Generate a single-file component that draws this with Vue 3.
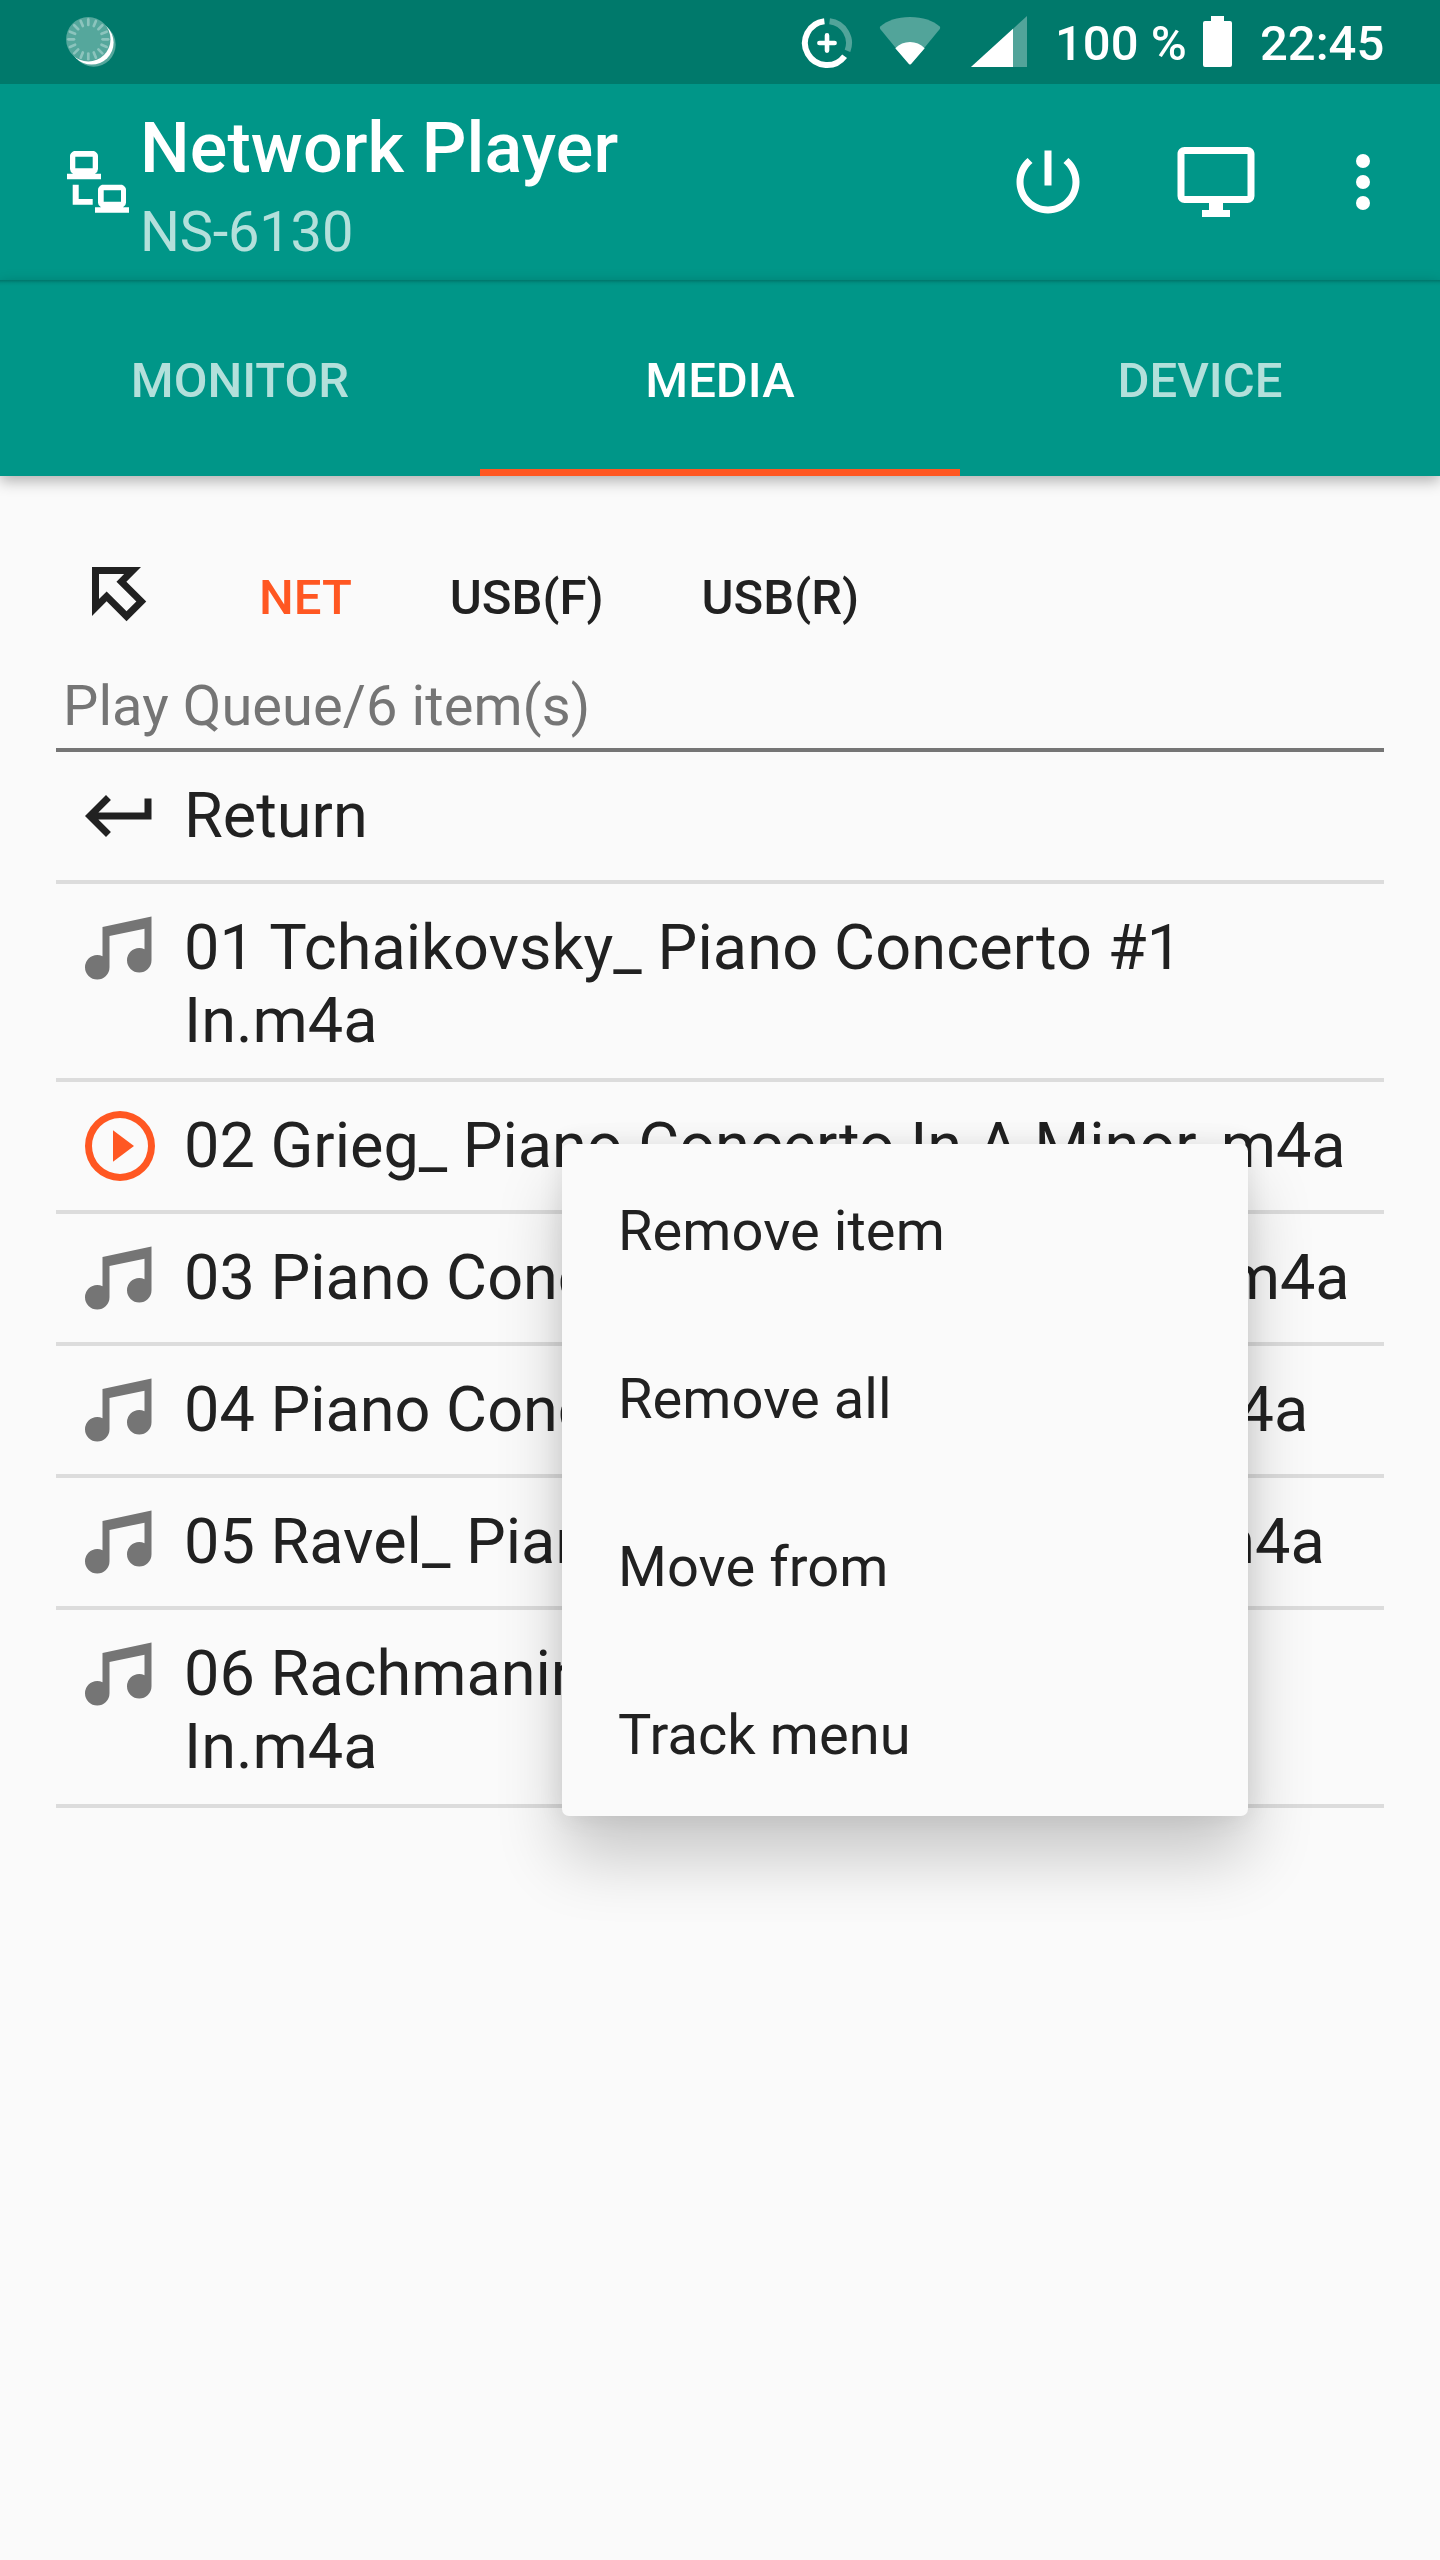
<script setup>
const tabs = [
  { label: 'Monitor' },
  { label: 'Media', active: true },
  { label: 'Device' },
]

const sources = [
  { label: 'NET', active: true },
  { label: 'USB(F)' },
  { label: 'USB(R)' },
]

const icons = {
  enter: 'M19,7V11H5.83L9.41,7.41L8,6L2,12L8,18L9.41,16.58L5.83,13H21V7H19Z',
  music:
    'M21,3V15.5A3.5,3.5 0 0,1 17.5,19A3.5,3.5 0 0,1 14,15.5A3.5,3.5 0 0,1 17.5,12C18.04,12 18.55,12.12 19,12.34V6.47L9,8.6V17.5A3.5,3.5 0 0,1 5.5,21A3.5,3.5 0 0,1 2,17.5A3.5,3.5 0 0,1 5.5,14C6.04,14 6.55,14.12 7,14.34V6L21,3Z',
  play:
    'M12,20A8,8 0 0,1 4,12A8,8 0 0,1 12,4A8,8 0 0,1 20,12A8,8 0 0,1 12,20M12,2A10,10 0 0,0 2,12A10,10 0 0,0 12,22A10,10 0 0,0 22,12A10,10 0 0,0 12,2M10,16.5L16,12L10,7.5V16.5Z',
}

const rows = [
  { icon: 'enter', title: 'Return' },
  { icon: 'music', title: '01 Tchaikovsky', rest: '_ Piano Concerto #1', ext: ' In.m4a', spacing: 0.14 },
  { icon: 'play', title: '02 Grieg_', rest: ' Piano Concerto In A Minor,', ext: ' m4a', spacing: -0.05 },
  { icon: 'music', title: '03 Piano Conc', rest: 'erto No. 21 In C Major.', ext: 'm4a', spacing: 0.34 },
  { icon: 'music', title: '04 Piano Conc', rest: 'erto No. 2 In C Minor.', ext: 'm4a', spacing: 0.05 },
  { icon: 'music', title: '05 Ravel_ Pian', rest: 'o Concerto In G Major.', ext: 'm4a', spacing: -0.68 },
  { icon: 'music', title: '06 Rachmaninov_ Piano Concerto #2 In.m4a' },
]

const menu = ['Remove item', 'Remove all', 'Move from', 'Track menu']
const ticks = Array.from({ length: 16 }, (_, i) => i * 22.5)
</script>

<template>
  <div class="screen">
    <div class="status">
      <svg class="spinner" width="52" height="52" viewBox="0 0 52 52">
        <circle cx="28.7" cy="27.7" r="22" fill="#55a79c" />
        <circle cx="26.6" cy="25.6" r="22" fill="#fff" />
        <circle cx="23.3" cy="22.3" r="22.2" fill="#55a79c" />
        <g stroke="#8cc4bd" stroke-width="2.7" stroke-linecap="round">
          <line
            v-for="t in ticks"
            :key="t"
            x1="23.3"
            y1="2.4"
            x2="23.3"
            y2="8"
            :transform="`rotate(${t} 23.3 22.3)`"
          />
        </g>
      </svg>
      <div class="indicators">
        <svg class="saver" width="52" height="52" viewBox="-26 -26 52 52" fill="none" stroke="#fff" stroke-width="6">
          <path d="M-2.6,-21.8A22,22 0 1 0 17.6,13.2" />
          <path d="M2.6,-21.8A22,22 0 0 1 20.5,7.9" opacity=".32" />
          <path d="M-7.600,0H7.600M0,-7.600V7.600" stroke-width="4.600" stroke-linecap="round" />
        </svg>
        <svg class="wifi" width="62" height="50" viewBox="0 0 62 50" fill="#fff">
          <path
            d="M1.2,10.6C8,4.6 18,1 31,1S54,4.6 60.8,10.6Q61.6,11.8 60.8,13.1L32.5,47.6Q31,49.4 29.5,47.6L1.2,13.1Q.4,11.8 1.2,10.6Z"
            opacity=".32"
          />
          <path d="M16.3,32.3Q22.5,26 31,26T45.7,32.3L32.5,47.6Q31,49.4 29.5,47.6Z" />
        </svg>
        <svg class="signal" width="56" height="51" viewBox="0 0 56 51" fill="#fff">
          <path d="M0,51L56,0V51Z" opacity=".32" />
          <path d="M0,51L42,12.8V51Z" />
        </svg>
        <span class="percent">100 %</span>
        <svg class="battery" width="29" height="51" viewBox="0 0 29 51" fill="#fff">
          <path d="M8,0H21V5H27Q29,5 29,7V49Q29,51 27,51H2Q0,51 0,49V7Q0,5 2,5H8Z" />
        </svg>
        <span class="clock">22:45</span>
      </div>
    </div>

    <header class="appbar">
      <svg class="logo" width="62" height="62" viewBox="0 0 62 62" fill="#fff">
        <path
          fill-rule="evenodd"
          d="M7,0H27Q31,2 31,5V18Q31,21 28,22.7H34V28.3H0V22.7H6Q3,21 3,18V5Q3,2 7,0ZM8.3,5.7V17.3H25.7V5.7Z"
        />
        <path d="M5.7,33.7H11.7V48H25.7V53.7H5.7Z" />
        <path
          fill-rule="evenodd"
          d="M35,33.7H55Q59,35.7 59,38.7V51.7Q59,54.7 56,56.3H62V61.7H28V56.3H34Q31,54.7 31,51.7V38.7Q31,35.7 35,33.7ZM36.7,39.3V50.7H54V39.3Z"
        />
      </svg>
      <div class="heading">
        <div class="title">Network Player</div>
        <div class="subtitle">NS-6130</div>
      </div>
      <div class="actions">
        <svg width="84" height="84" viewBox="0 0 24 24" fill="#fff">
          <path
            d="M13 3h-2v10h2V3zm4.83 2.17l-1.42 1.42C17.99 7.86 19 9.81 19 12c0 3.87-3.13 7-7 7s-7-3.13-7-7c0-2.19 1.01-4.14 2.58-5.42L6.17 5.17C4.23 6.82 3 9.26 3 12c0 4.97 4.03 9 9 9s9-4.03 9-9c0-2.74-1.23-5.18-3.17-6.83z"
          />
        </svg>
        <svg width="84" height="84" viewBox="0 0 24 24" fill="#fff">
          <path
            d="M21,16H3V4H21M21,2H3C1.89,2 1,2.89 1,4V16A2,2 0 0,0 3,18H10V20H8V22H16V20H14V18H21A2,2 0 0,0 23,16V4C23,2.89 22.1,2 21,2Z"
          />
        </svg>
        <svg class="more" width="84" height="84" viewBox="0 0 24 24" fill="#fff">
          <circle cx="12" cy="6" r="2" />
          <circle cx="12" cy="12" r="2" />
          <circle cx="12" cy="18" r="2" />
        </svg>
      </div>
    </header>

    <nav class="tabs">
      <div v-for="t in tabs" :key="t.label" class="tab" :class="{ active: t.active }">{{ t.label }}</div>
    </nav>

    <main class="content">
      <div class="sources">
        <svg width="84" height="84" viewBox="0 0 24 24" fill="#212121">
          <path
            fill-rule="evenodd"
            d="M4,4H18L13.82,8.18L19.5,13.86L13.86,19.5L8.18,13.82L4,18ZM6,6V13.17L8.18,10.99L13.86,16.67L16.67,13.86L10.99,8.18L13.17,6Z"
          />
        </svg>
        <span v-for="s in sources" :key="s.label" class="source" :class="{ active: s.active }">{{ s.label }}</span>
      </div>

      <div class="path">Play Queue/6 item(s)</div>

      <div v-for="r in rows" :key="r.title" class="row">
        <svg class="icon" :class="r.icon" width="84" height="84" viewBox="0 0 24 24">
          <path :d="icons[r.icon]" />
        </svg>
        <div class="name">{{ r.title }}<span v-if="r.rest" :style="{ letterSpacing: r.spacing + 'px' }">{{ r.rest }}</span>{{ r.ext }}</div>
      </div>
    </main>

    <div class="menu">
      <div v-for="m in menu" :key="m" class="entry">{{ m }}</div>
    </div>
  </div>
</template>

<style>
body {
  background: #fafafa;
}
</style>

<style scoped>
.screen {
  position: relative;
  width: 1440px;
  height: 2560px;
  overflow: hidden;
  background: #fafafa;
  color: #212121;
  font-family: Roboto, sans-serif;
}
svg {
  display: block;
  flex: none;
}
.status {
  display: flex;
  justify-content: space-between;
  height: 84px;
  padding: 0 54px 0 65px;
  background: #00796b;
  color: #fff;
  font-size: 49px;
  font-weight: 500;
  line-height: 57px;
}
.spinner {
  margin-top: 17px;
}
.indicators {
  display: flex;
  align-items: flex-start;
}
.saver {
  margin: 17px 26px 0 0;
}
.wifi {
  margin: 16px 30px 0 0;
}
.signal {
  margin: 16px 28px 0 0;
}
.percent,
.clock {
  margin-top: 15px;
  white-space: nowrap;
}
.percent {
  width: 148px;
}
.battery {
  margin-top: 16px;
}
.clock {
  width: 126px;
  margin-left: 28px;
}
.appbar {
  display: flex;
  height: 196px;
  padding-left: 67px;
  background: #009688;
  color: #fff;
}
.logo {
  margin-top: 67px;
}
.heading {
  flex: 1;
  margin-left: 11px;
  padding-top: 23px;
}
.title {
  font-size: 70px;
  font-weight: 500;
  line-height: 82px;
  letter-spacing: 0.12px;
}
.subtitle {
  margin-top: 10px;
  font-size: 56px;
  line-height: 66px;
  letter-spacing: -0.2px;
  color: rgba(255, 255, 255, 0.7);
}
.actions {
  display: flex;
  gap: 84px;
  padding: 56px 35px 0 0;
}
.more {
  margin-left: -21px;
}
.tabs {
  display: flex;
  height: 196px;
  background: linear-gradient(rgba(0, 0, 0, 0.22), rgba(0, 0, 0, 0.05) 3px, transparent 6px) #009688;
  box-shadow: 0 5px 14px rgba(0, 0, 0, 0.3);
}
.tab {
  flex: 1;
  box-sizing: border-box;
  padding-top: 72px;
  border-bottom: 7px solid transparent;
  color: rgba(255, 255, 255, 0.7);
  font-size: 49px;
  font-weight: 500;
  line-height: 57px;
  text-align: center;
  text-transform: uppercase;
}
.tab.active {
  border-color: #ff5722;
  color: #fff;
}
.content {
  padding: 70px 56px 0;
}
.sources {
  display: flex;
  align-items: center;
  gap: 98px;
  height: 98px;
  padding-left: 22px;
}
.source {
  padding-top: 4px;
  font-size: 49px;
  font-weight: 500;
  line-height: 57px;
}
.source.active {
  margin-left: -1px;
  color: #ff5722;
}
.path {
  height: 75px;
  padding: 29px 7px 0;
  border-bottom: 4px solid #757575;
  color: #757575;
  font-size: 56px;
  line-height: 66px;
  letter-spacing: 0.08px;
}
.row {
  display: flex;
  box-sizing: border-box;
  min-height: 132px;
  padding: 22px 0 22px 22px;
  border-bottom: 4px solid #dcdcdc;
}
.icon {
  fill: #757575;
}
.icon.enter {
  fill: #212121;
}
.icon.play {
  fill: #ff5722;
}
.name {
  flex: 1;
  margin: 0 0 -1px 22px;
  padding: 5px 6px 0 0;
  font-size: 63px;
  line-height: 73px;
}
.menu {
  position: absolute;
  left: 562px;
  top: 1144px;
  width: 686px;
  border-radius: 7px;
  background: #fafafa;
  box-shadow:
    0 42px 66px rgba(0, 0, 0, 0.2),
    0 0 26px rgba(0, 0, 0, 0.09);
}
.entry {
  box-sizing: border-box;
  height: 168px;
  padding: 54px 56px 0;
  font-size: 56px;
  line-height: 66px;
  letter-spacing: 0.08px;
}
</style>
